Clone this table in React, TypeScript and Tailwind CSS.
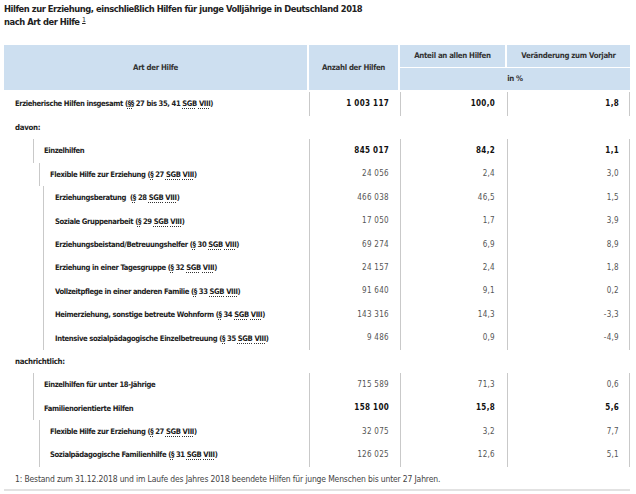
import React from 'react';

type Row = {
  label?: React.ReactNode;
  level?: number;
  a?: string;
  b?: string;
  c?: string;
  bold?: boolean;
  section?: string;
};

// dotted abbreviation underline like the source table
const Ab = ({ children }: { children: React.ReactNode }) => (
  <span className="underline decoration-dotted decoration-[#333] underline-offset-2">{children}</span>
);

const Law = ({ n }: { n: string }) => (
  <>
    (<Ab>§</Ab> {n} <Ab>SGB</Ab> <Ab>VIII</Ab>)
  </>
);

const ROWS: Row[] = [
  {
    label: (
      <>
        Erzieherische Hilfen insgesamt (<Ab>§§</Ab> 27 bis 35, 41 <Ab>SGB</Ab> <Ab>VIII</Ab>)
      </>
    ),
    level: 0, a: '1 003 117', b: '100,0', c: '1,8', bold: true,
  },
  { section: 'davon:' },
  { label: 'Einzelhilfen', level: 1, a: '845 017', b: '84,2', c: '1,1', bold: true },
  { label: <>Flexible Hilfe zur Erziehung <Law n="27" /></>, level: 2, a: '24 056', b: '2,4', c: '3,0' },
  { label: <>Erziehungsberatung {'\u00a0'}<Law n="28" /></>, level: 3, a: '466 038', b: '46,5', c: '1,5' },
  { label: <>Soziale Gruppenarbeit <Law n="29" /></>, level: 3, a: '17 050', b: '1,7', c: '3,9' },
  { label: <>Erziehungsbeistand/Betreuungshelfer <Law n="30" /></>, level: 3, a: '69 274', b: '6,9', c: '8,9' },
  { label: <>Erziehung in einer Tagesgruppe <Law n="32" /></>, level: 3, a: '24 157', b: '2,4', c: '1,8' },
  { label: <>Vollzeitpflege in einer anderen Familie <Law n="33" /></>, level: 3, a: '91 640', b: '9,1', c: '0,2' },
  { label: <>Heimerziehung, sonstige betreute Wohnform <Law n="34" /></>, level: 3, a: '143 316', b: '14,3', c: '-3,3' },
  { label: <>Intensive sozialpädagogische Einzelbetreuung <Law n="35" /></>, level: 3, a: '9 486', b: '0,9', c: '-4,9' },
  { section: 'nachrichtlich:' },
  { label: 'Einzelhilfen für unter 18-Jährige', level: 1, a: '715 589', b: '71,3', c: '0,6' },
  { label: 'Familienorientierte Hilfen', level: 1, a: '158 100', b: '15,8', c: '5,6', bold: true },
  { label: <>Flexible Hilfe zur Erziehung <Law n="27" /></>, level: 2, a: '32 075', b: '3,2', c: '7,7' },
  { label: <>Sozialpädagogische Familienhilfe <Law n="31" /></>, level: 2, a: '126 025', b: '12,6', c: '5,1' },
];

const LABEL_INDENT: Record<number, string> = {
  0: 'pl-[11px]',
  1: 'ml-[29px] border-l border-[#c9c9c9] pl-[10px]',
  2: 'ml-[35px] border-l border-[#c9c9c9] pl-[10px]',
  3: 'ml-[39px] border-l border-[#c9c9c9] pl-[11px]',
};

export default function App() {
  return (
    <div className="w-[636px] h-[494px] bg-white px-[4px] pt-[2px] font-['DejaVu_Sans_Condensed','DejaVu_Sans',sans-serif] text-[#222]">
      {/* Title */}
      <h1 className="text-[9.3px] font-bold leading-[13px] tracking-[-0.45px] text-[#222]">
        Hilfen zur Erziehung, einschließlich Hilfen für junge Volljährige in Deutschland 2018
        <br />
        nach Art der Hilfe <sup className="text-[7px] font-normal underline">1</sup>
      </h1>

      {/* Table header */}
      <div className="mt-[17px] grid w-[626px] grid-cols-[303px_89px_105px_123px] grid-rows-[22px_22px] gap-x-[2px] gap-y-[1px] text-[7.8px] font-bold tracking-[-0.3px] text-[#333]">
        <div className="row-span-2 flex items-center justify-center bg-[#cddff0]">Art der Hilfe</div>
        <div className="row-span-2 flex items-center justify-center bg-[#cddff0]">Anzahl der Hilfen</div>
        <div className="flex items-center justify-center bg-[#cddff0]">Anteil an allen Hilfen</div>
        <div className="flex items-center justify-center bg-[#cddff0]">Veränderung zum Vorjahr</div>
        <div className="col-span-2 flex items-center justify-center bg-[#cddff0]">in %</div>
      </div>

      {/* Table body */}
      <div className="w-[626px] pt-[2px]">
        {ROWS.map((r, i) =>
          r.section ? (
            <div key={i} className="flex h-[23.4px] items-center pl-[11px] text-[7.8px] font-bold tracking-[-0.3px]">
              <span>{r.section}</span>
            </div>
          ) : (
            <div key={i} className={`flex ${i === 0 ? 'h-[24px]' : 'h-[23.4px]'}`}>
              <div className="flex w-[305px]">
                <div className={`flex flex-1 items-center text-[7.6px] font-bold tracking-[-0.38px] text-[#222] ${LABEL_INDENT[r.level ?? 0]}`}>
                  <span className="whitespace-nowrap">{r.label}</span>
                </div>
              </div>
              <div
                className={`flex w-[91px] items-center justify-end border-l border-[#c9c9c9] pr-[11px] text-[8px] tracking-[0.3px] ${
                  r.bold ? 'font-bold text-[#111]' : 'text-[#555]'
                }`}
              >
                {r.a}
              </div>
              <div
                className={`flex w-[107px] items-center justify-end border-l border-[#c9c9c9] pr-[12px] text-[8px] tracking-[0.3px] ${
                  r.bold ? 'font-bold text-[#111]' : 'text-[#555]'
                }`}
              >
                {r.b}
              </div>
              <div
                className={`flex w-[123px] items-center justify-end border-x border-[#c9c9c9] pr-[10px] text-[8px] tracking-[0.3px] ${
                  r.bold ? 'font-bold text-[#111]' : 'text-[#555]'
                }`}
              >
                {r.c}
              </div>
            </div>
          )
        )}
      </div>

      {/* Footnote */}
      <div className="mt-[6px] w-[626px] border-b-2 border-[#e2e2e2] pb-[3px] pl-[11px] text-[8.5px] tracking-[-0.15px] text-[#444]">
        1: Bestand zum 31.12.2018 und im Laufe des Jahres 2018 beendete Hilfen für junge Menschen bis unter 27 Jahren.
      </div>
    </div>
  );
}
